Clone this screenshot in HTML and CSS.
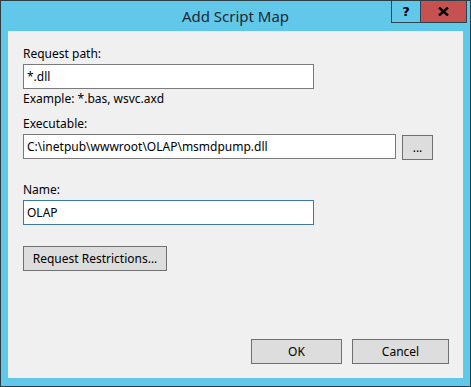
FILE: index.html
```html
<!DOCTYPE html>
<html lang="en">
<head>
    <meta charset="UTF-8">
    <title>Add Script Map</title>
    <link rel="stylesheet" href="styles.css">
</head>
<body>
    <div class="window">
        <!-- Заголовок окна -->
        <div class="titlebar">
            <div></div>
            <div class="title">Add Script Map</div>
            <div class="caption-buttons">
                <div class="cap-btn help">?</div>
                <div class="cap-btn close">
                    <svg width="11" height="9" viewBox="0 0 11 9">
                        <path d="M1 0.5 L10 8.5 M10 0.5 L1 8.5" stroke="#000" stroke-width="2.4" fill="none"/>
                    </svg>
                </div>
            </div>
        </div>

        <div class="client">
            <div class="label first">Request path:</div>
            <div class="textbox short">*.dll</div>
            <div class="hint">Example: *.bas, wsvc.axd</div>

            <div class="label exec">Executable:</div>
            <div class="row">
                <div class="textbox long">C:\inetpub\wwwroot\OLAP\msmdpump.dll</div>
                <div class="btn browse">...</div>
            </div>

            <div class="label name">Name:</div>
            <div class="textbox short focused">OLAP</div>

            <div class="btn restrict">Request Restrictions...</div>

            <div class="footer">
                <div class="btn ok">OK</div>
                <div class="btn cancel">Cancel</div>
            </div>
        </div>
    </div>
</body>
</html>
```

FILE: styles.css
```css
body {
    margin: 0;
    font-family: "Noto Sans", "Open Sans", sans-serif;
    font-size: 12px;
    color: #000;
}

.window {
    width: 471px;
    height: 387px;
    box-sizing: border-box;
    border: 1px solid #2d3d44;
    background: #62c8ea;
    display: flex;
    flex-direction: column;
}

.titlebar {
    height: 30px;
    display: grid;
    grid-template-columns: 1fr auto 1fr;
}

.title {
    font-size: 15px;
    line-height: 22px;
    padding-top: 4px;
    color: #1b2a33;
}

.caption-buttons {
    display: flex;
    justify-content: flex-end;
    padding-right: 3px;
}

.cap-btn {
    height: 22px;
    box-sizing: border-box;
    border: 1px solid #2d4450;
    border-top: none;
    display: flex;
    align-items: center;
    justify-content: center;
}

.help {
    width: 29px;
    border-right: none;
    font-weight: bold;
    font-size: 13px;
    font-family: "DejaVu Sans", sans-serif;
}

.close {
    width: 47px;
    background: #c75050;
}

.client {
    flex: 1;
    margin: 0 7px 8px 7px;
    background: #f0f0f0;
    border-top: 1px solid #e2eef3;
    padding: 14px 0 0 15px;
    display: flex;
    flex-direction: column;
    align-items: flex-start;
}

.label, .hint {
    line-height: 16px;
    height: 16px;
}

.label.exec {
    margin-top: 9px;
}

.label.name {
    margin-top: 22px;
}

.hint {
    margin-top: 2px;
}

.textbox {
    margin-top: 2px;
    height: 25px;
    box-sizing: border-box;
    border: 1px solid #7a7a7a;
    background: #fff;
    padding: 0 3px;
    line-height: 23px;
    white-space: nowrap;
}

.textbox.short {
    width: 291px;
}

.textbox.long {
    width: 373px;
}

.textbox.focused {
    border-color: #3c78a8;
}

.row {
    display: flex;
    align-items: flex-start;
    gap: 6px;
}

.btn {
    height: 25px;
    box-sizing: border-box;
    border: 1px solid #707070;
    background: #dddddd;
    line-height: 23px;
    text-align: center;
}

.browse {
    width: 31px;
    margin-top: 3px;
}

.restrict {
    width: 144px;
    margin-top: 21px;
}

.footer {
    margin-top: auto;
    margin-bottom: 14px;
    align-self: stretch;
    display: flex;
    justify-content: flex-end;
    gap: 10px;
    padding-right: 14px;
}

.ok {
    width: 91px;
    border-color: #3c7fb1;
}

.cancel {
    width: 97px;
}
```
